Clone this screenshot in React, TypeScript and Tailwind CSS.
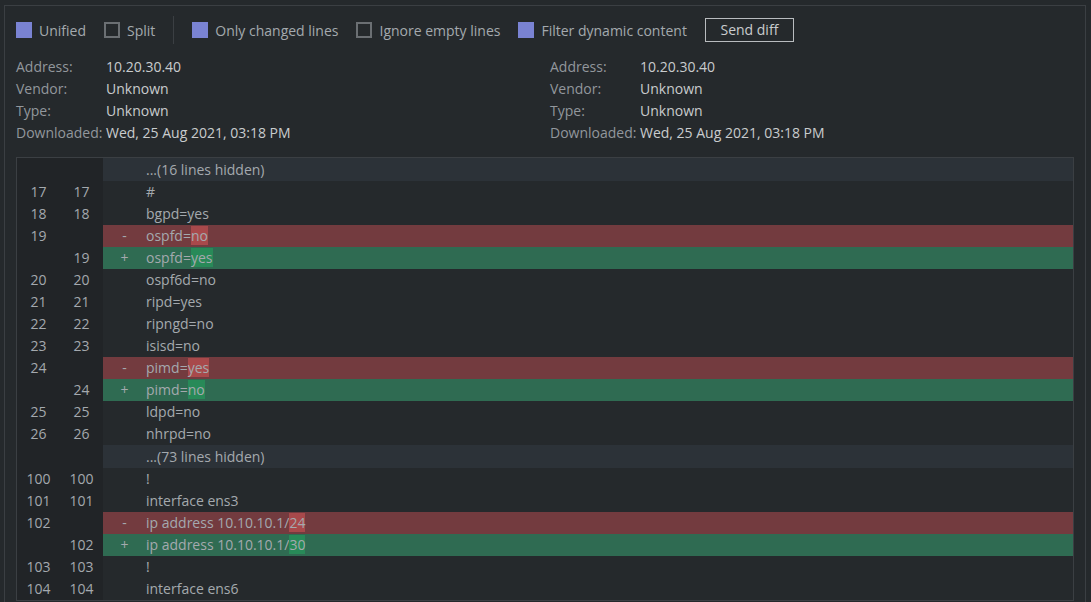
import React from 'react';

type Row =
  | { kind: 'hidden'; text: string }
  | { kind: 'same' | 'del' | 'add'; a?: number; b?: number; pre: string; mark?: string };

const rows: Row[] = [
  { kind: 'hidden', text: '...(16 lines hidden)' },
  { kind: 'same', a: 17, b: 17, pre: '#' },
  { kind: 'same', a: 18, b: 18, pre: 'bgpd=yes' },
  { kind: 'del', a: 19, pre: 'ospfd=', mark: 'no' },
  { kind: 'add', b: 19, pre: 'ospfd=', mark: 'yes' },
  { kind: 'same', a: 20, b: 20, pre: 'ospf6d=no' },
  { kind: 'same', a: 21, b: 21, pre: 'ripd=yes' },
  { kind: 'same', a: 22, b: 22, pre: 'ripngd=no' },
  { kind: 'same', a: 23, b: 23, pre: 'isisd=no' },
  { kind: 'del', a: 24, pre: 'pimd=', mark: 'yes' },
  { kind: 'add', b: 24, pre: 'pimd=', mark: 'no' },
  { kind: 'same', a: 25, b: 25, pre: 'ldpd=no' },
  { kind: 'same', a: 26, b: 26, pre: 'nhrpd=no' },
  { kind: 'hidden', text: '...(73 lines hidden)' },
  { kind: 'same', a: 100, b: 100, pre: '!' },
  { kind: 'same', a: 101, b: 101, pre: 'interface ens3' },
  { kind: 'del', a: 102, pre: 'ip address 10.10.10.1/', mark: '24' },
  { kind: 'add', b: 102, pre: 'ip address 10.10.10.1/', mark: '30' },
  { kind: 'same', a: 103, b: 103, pre: '!' },
  { kind: 'same', a: 104, b: 104, pre: 'interface ens6' },
];

const Check = ({ on, label }: { on: boolean; label: string }) => (
  <label className="flex items-center gap-[7px]">
    {on ? (
      <span className="w-4 h-4 bg-[#7a83d3]" />
    ) : (
      <span className="w-4 h-4 border-2 border-[#6b6f73]" />
    )}
    <span>{label}</span>
  </label>
);

const Info = ({ addr }: { addr: string }) => (
  <div className="grid grid-cols-[90px_1fr] leading-[22px]">
    <span className="text-[#92979c]">Address:</span>
    <span className="text-[#c9ccce]">{addr}</span>
    <span className="text-[#92979c]">Vendor:</span>
    <span className="text-[#c9ccce]">Unknown</span>
    <span className="text-[#92979c]">Type:</span>
    <span className="text-[#c9ccce]">Unknown</span>
    <span className="text-[#92979c]">Downloaded:</span>
    <span className="text-[#c9ccce]">Wed, 25 Aug 2021, 03:18 PM</span>
  </div>
);

const DiffRow = ({ row }: { row: Row }) => {
  if (row.kind === 'hidden') {
    return (
      <div className="flex h-[23px] leading-[23px]">
        <div className="w-[86px] bg-[#212427]" />
        <div className="flex-1 bg-[#2c3238] pl-[43px]">{row.text}</div>
      </div>
    );
  }
  const bg =
    row.kind === 'del' ? 'bg-[#733b3f]' : row.kind === 'add' ? 'bg-[#2f6b52]' : '';
  const markBg = row.kind === 'del' ? 'bg-[#a8494b]' : 'bg-[#288a58]';
  return (
    <div className="flex h-[22px] leading-[22px]">
      <div className="w-[86px] flex bg-[#212427]">
        <span className="w-[43px] text-center">{row.a ?? ''}</span>
        <span className="w-[43px] text-center">{row.b ?? ''}</span>
      </div>
      <div className={`flex-1 flex ${bg}`}>
        <span className="w-[43px] text-center">
          {row.kind === 'del' ? '-' : row.kind === 'add' ? '+' : ''}
        </span>
        <span>
          {row.pre}
          {row.mark && <span className={markBg}>{row.mark}</span>}
        </span>
      </div>
    </div>
  );
};

export default function App() {
  return (
    <div className="h-screen overflow-hidden bg-[#25292c] font-['Open_Sans',sans-serif] text-[14px] text-[#a4a9ae] pt-[5px] pl-[4px] pr-[5px]">
      <div className="border border-[#3b3f43] px-[11px] pt-[10px] h-[700px]">
        <div className="flex items-center gap-[18px] h-[28px]">
          <Check on label="Unified" />
          <Check on={false} label="Split" />
          <div className="w-px self-stretch bg-[#3b3f43]" />
          <Check on label="Only changed lines" />
          <Check on={false} label="Ignore empty lines" />
          <Check on label="Filter dynamic content" />
          <button className="border border-[#b9bcbf] text-[#c9ccce] h-[24px] w-[89px] leading-[20px]">
            Send diff
          </button>
        </div>
        <div className="grid grid-cols-2 gap-[10px] mt-[12px]">
          <Info addr="10.20.30.40" />
          <Info addr="10.20.30.40" />
        </div>
        <div className="mt-[13px] border border-[#3b3f43]">
          {rows.map((r, i) => (
            <DiffRow key={i} row={r} />
          ))}
        </div>
      </div>
    </div>
  );
}
